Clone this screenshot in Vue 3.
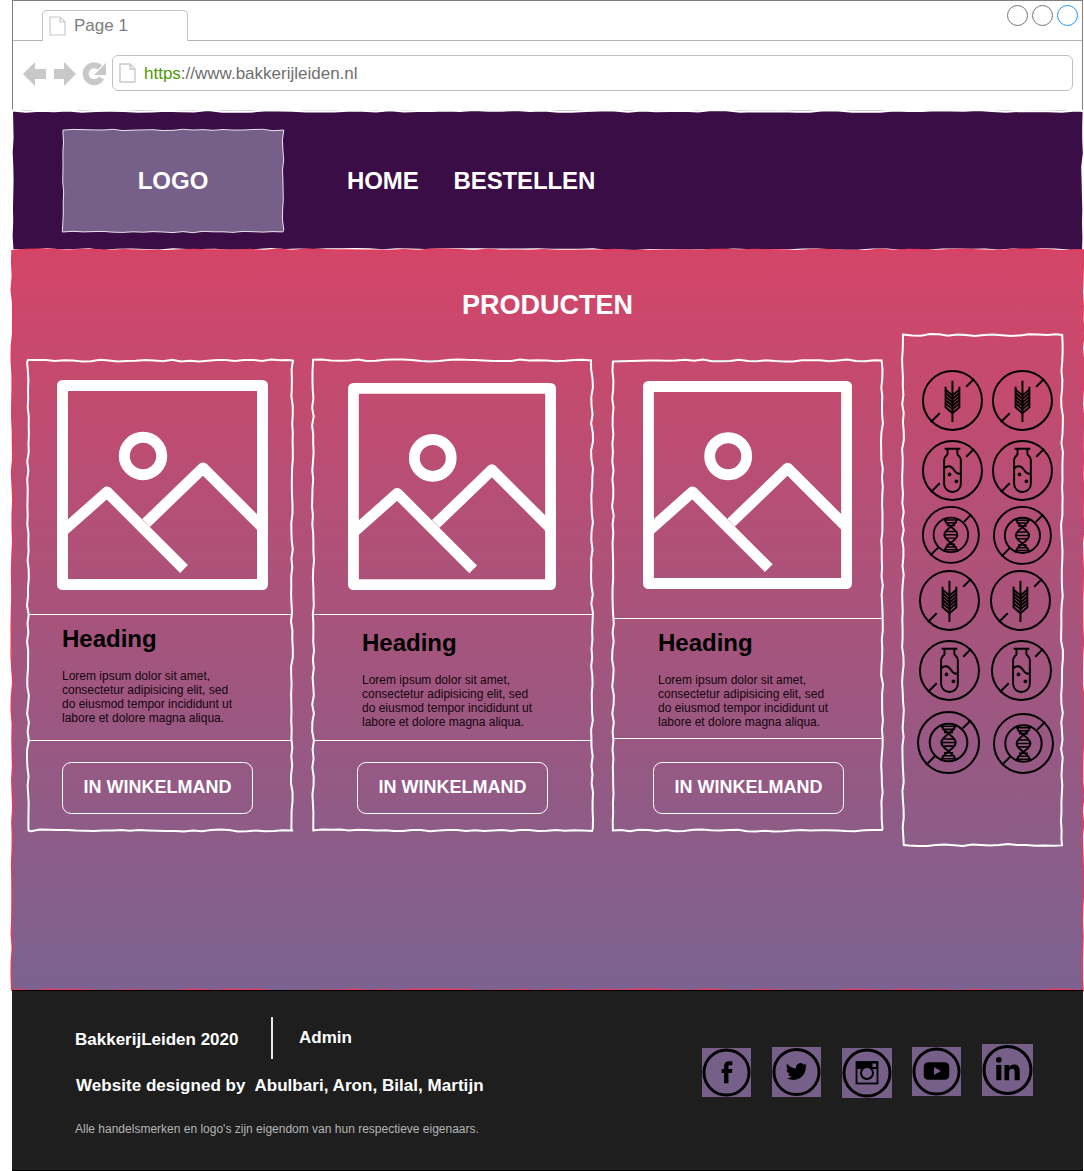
<script setup>
// hand-drawn looking rectangle outline, same seed gives same line
function wobble(w, h, seed, amp = 1, step = 9) {
  let s = seed * 9301 + 49297
  const rnd = () => {
    s = (s * 9301 + 49297) % 233280
    return (s / 233280 - 0.5) * 2 * amp
  }
  const pts = []
  for (let x = 0; x < w; x += step) pts.push([x, rnd()])
  for (let y = 0; y < h; y += step) pts.push([w + rnd(), y])
  for (let x = w; x > 0; x -= step) pts.push([x, h + rnd()])
  for (let y = h; y > 0; y -= step) pts.push([rnd(), y])
  return 'M' + pts.map(p => p[0].toFixed(1) + ' ' + p[1].toFixed(1)).join('L') + 'Z'
}

const cards = [
  { id: 1, w: 265, h: 470 },
  { id: 2, w: 280, h: 470 },
  { id: 3, w: 270, h: 470 }
]

// r and cx are in page pixels, the circle in the viewBox has r=30
const colStart = [916, 986]
const icons = [
  { kind: 'wheat', r: 29.5, cx: 952 },
  { kind: 'wheat', r: 29.5, cx: 1022 },
  { kind: 'vial', r: 29.5, cx: 952 },
  { kind: 'vial', r: 29.5, cx: 1022 },
  { kind: 'dna', r: 28, cx: 951 },
  { kind: 'dna', r: 28.5, cx: 1022 },
  { kind: 'wheat', r: 29.5, cx: 949 },
  { kind: 'wheat', r: 29.5, cx: 1020 },
  { kind: 'vial', r: 29.5, cx: 949 },
  { kind: 'vial', r: 29.5, cx: 1021 },
  { kind: 'dna', r: 30.5, cx: 949 },
  { kind: 'dna', r: 29.5, cx: 1023 }
].map((ic, i) => {
  const size = (ic.r * 64) / 30
  return { ...ic, size, ml: ic.cx - size / 2 - colStart[i % 2] }
})

const socials = [
  { name: 'facebook', w: 49, h: 49, mt: 4 },
  { name: 'twitter', w: 49, h: 50, mt: 3 },
  { name: 'instagram', w: 50, h: 50, mt: 4 },
  { name: 'youtube', w: 49, h: 49, mt: 3 },
  { name: 'linkedin', w: 51, h: 52, mt: 0 }
]
</script>

<template>
  <div class="page">
    <div class="chrome">
      <div class="tabbar">
        <div class="tab">
          <svg class="doc" width="17" height="20" viewBox="0 0 17 20">
            <path d="M1 1h10l5 5v13H1z M11 1v5h5" fill="#fff" stroke="#c9c9c9" stroke-width="1.2" />
          </svg>
          <span>Page 1</span>
        </div>
        <div class="winbtns">
          <i></i><i></i><i class="blue"></i>
        </div>
      </div>
      <div class="addr-row">
        <svg class="navicons" width="84" height="26" viewBox="0 0 84 26" fill="#c8c8c8">
          <path d="M0 14 12 2V9H23V19H12V26z" />
          <path d="M53 14 41 2V9H31V19H41V26z" />
          <path d="M78.500 18A8.500 8.500 0 1 1 77 7.500" fill="none" stroke="#c8c8c8" stroke-width="6" />
          <path d="M83 3V15H71z" />
        </svg>
        <div class="addr">
          <svg width="17" height="20" viewBox="0 0 17 20">
            <path d="M1 1h10l5 5v13H1z M11 1v5h5" fill="#fff" stroke="#c9c9c9" stroke-width="1.4" />
          </svg>
          <span class="url"><span class="https">https</span>://www.bakkerijleiden.nl</span>
        </div>
      </div>
    </div>

    <header class="header">
      <svg class="sketch"><path :d="wobble(1071, 139, 3, 0.9, 14)" fill="none" stroke="#fff" stroke-width="2" /></svg>
      <div class="logo">
        <svg class="sketch"><path :d="wobble(220, 102, 7, 0.8, 10)" fill="none" stroke="#e8e2ee" stroke-width="1" /></svg>
        LOGO
      </div>
      <nav class="nav">
        <a>HOME</a>
        <a>BESTELLEN</a>
      </nav>
    </header>

    <main class="main">
      <svg class="sketch"><path :d="wobble(1071, 740, 11, 0.9, 14)" fill="none" stroke="#e63a5c" stroke-width="1.5" /></svg>
      <h1 class="title">PRODUCTEN</h1>
      <div class="row">
        <div v-for="c in cards" :key="c.id" class="card" :class="'card-' + c.id">
          <svg class="sketch"><path :d="wobble(c.w - 1, c.h, c.id + 20)" transform="translate(1 0.500)" fill="none" stroke="#fff" stroke-width="2" /></svg>
          <div class="card-img">
            <svg class="placeholder" viewBox="0 0 211 211" fill="none" stroke="#fff" stroke-width="11" stroke-linejoin="round">
              <rect x="5.500" y="5.500" width="200" height="199" />
              <circle cx="86" cy="76" r="18.700" />
              <path d="M6 151 50 112 127 189" />
              <path d="M89 143 146 88 205 147" />
            </svg>
          </div>
          <div class="card-text">
            <h2>Heading</h2>
            <p>Lorem ipsum dolor sit amet,<br>consectetur adipisicing elit, sed<br>do eiusmod tempor incididunt ut<br>labore et dolore magna aliqua.</p>
          </div>
          <div class="card-btn">
            <button>IN WINKELMAND</button>
          </div>
        </div>

        <aside class="side">
          <svg class="sketch"><path :d="wobble(159, 510, 33)" transform="translate(1 1)" fill="none" stroke="#fff" stroke-width="2" /></svg>
          <div class="side-grid">
            <svg
              v-for="(ic, i) in icons"
              :key="i"
              class="allergen"
              :style="{ width: ic.size + 'px', height: ic.size + 'px', marginLeft: ic.ml + 'px' }"
              viewBox="-32 -32 64 64"
              fill="none"
              stroke="#000"
              stroke-width="2"
            >
              <circle r="30" />
              <path d="M22-22 14-14M-13 13-22 22" />
              <g v-if="ic.kind === 'wheat'">
                <path d="M0-20V22M-7-14V7L0 13 7 7V-14" />
                <path d="M-7-11 0-5 7-11M-7-7.500 0-1.500 7-7.500M-7-4 0 2 7-4M-7-.5 0 5.500 7-.5M-7 3 0 9 7 3" />
              </g>
              <g v-else-if="ic.kind === 'vial'">
                <path d="M-8-22H8M-5-21V-17C-5-15-8.500-14-8.500-11V13.500A8.500 8.500 0 0 0 8.500 13.500V-11C8.500-14 5-15 5-17V-21" />
                <path d="M-8.500-2C-4-7 0-3 2 0 4 3 6 4 8.500 3" />
                <circle cx="-3" cy="4" r="1.900" fill="#000" stroke="none" />
                <circle cx="4" cy="11" r="1.900" fill="#000" stroke="none" />
              </g>
              <g v-else>
                <circle r="18.500" />
                <path d="M-7-18C-7-10 7-7 7 0S-7 10-7 18M7-18C7-10-7-7-7 0S7 10 7 18" />
                <path d="M-7-16H7M-6-13H6M-4.500-10H4.500M-5-3.500H5M-7 0H7M-5 3.500H5M-4.500 10H4.500M-6 13H6M-7 16H7" stroke-width="1.600" />
              </g>
            </svg>
          </div>
        </aside>
      </div>
    </main>

    <footer class="footer">
      <div class="foot-left">
        <div class="foot-top">
          <span class="brand">BakkerijLeiden 2020</span>
          <span class="divider"></span>
          <span class="admin">Admin</span>
        </div>
        <div class="credits">Website designed by&nbsp; Abulbari, Aron, Bilal, Martijn</div>
        <div class="legal">Alle handelsmerken en logo's zijn eigendom van hun respectieve eigenaars.</div>
      </div>
      <div class="socials">
        <svg
          v-for="s in socials"
          :key="s.name"
          class="social"
          :style="{ width: s.w + 'px', height: s.h + 'px', marginTop: s.mt + 'px' }"
          viewBox="0 0 50 50"
        >
          <circle cx="25" cy="25" r="23" fill="none" stroke="#000" stroke-width="3" />
          <path v-if="s.name === 'facebook'" d="M31 13.500h-3.500c-3 0-5 2-5 5v3H20v4h2.500V36H27V25.500h3.500l.5-4h-4V19c0-1 .5-1.500 1.500-1.500H31z" />
          <path v-else-if="s.name === 'twitter'" transform="translate(14 14) scale(.9)" d="M23.953 4.570a10 10 0 0 1-2.825.775 4.958 4.958 0 0 0 2.163-2.723c-.951.555-2.005.959-3.127 1.184a4.920 4.920 0 0 0-8.384 4.482C7.690 8.095 4.067 6.130 1.640 3.162a4.822 4.822 0 0 0-.666 2.475c0 1.710.870 3.213 2.188 4.096a4.904 4.904 0 0 1-2.228-.616v.060a4.923 4.923 0 0 0 3.946 4.827 4.996 4.996 0 0 1-2.212.085 4.936 4.936 0 0 0 4.604 3.417 9.867 9.867 0 0 1-6.102 1.510 13.995 13.995 0 0 0 7.557 2.209c9.053 0 13.998-7.496 13.998-13.985 0-.210 0-.420-.015-.630A9.935 9.935 0 0 0 24 4.590z" />
          <g v-else-if="s.name === 'instagram'">
            <rect x="14.500" y="14" width="21" height="21.500" fill="none" stroke="#000" stroke-width="1.800" />
            <rect x="14.500" y="14" width="21" height="7" />
            <rect x="30.500" y="15.500" width="3.500" height="3.500" fill="#76608a" />
            <circle cx="25" cy="25" r="6" fill="#76608a" stroke="#000" stroke-width="2" />
          </g>
          <g v-else-if="s.name === 'youtube'">
            <rect x="12" y="15.500" width="26" height="18" rx="4.500" />
            <path d="M22.500 20.500v8l7-4z" fill="#76608a" />
          </g>
          <g v-else>
            <circle cx="16.500" cy="15" r="2.800" />
            <rect x="14" y="20" width="5" height="15" />
            <path d="M22 20h4.600v2.200c1-1.700 2.800-2.600 4.900-2.600 4 0 5.500 2.600 5.500 6.500V35h-5v-8c0-2-.6-3.300-2.400-3.300-2 0-3 1.300-3 3.500V35H22z" />
          </g>
        </svg>
      </div>
    </footer>
  </div>
</template>

<style>
body { background: #fff; }
</style>

<style scoped>
.page { width: 1071px; margin-left: 12px; font-family: "Liberation Sans", Arial, sans-serif; }

.chrome { height: 111px; box-sizing: border-box; border: 1px solid #808080; border-bottom-color: #bdbdbd; background: #fff; }
.tabbar { height: 40px; border-bottom: 1px solid #b5b5b5; display: flex; justify-content: space-between; padding: 9px 4px 0 29px; box-sizing: border-box; }
.tab { width: 146px; height: 31px; box-sizing: border-box; border: 1px solid #c4c4c4; border-bottom: 0; border-radius: 5px 5px 0 0; background: #fff; display: flex; align-items: center; gap: 8px; padding-left: 6px; color: #7d7d7d; font-size: 17px; margin-bottom: -1px; }
.winbtns { display: flex; gap: 4px; margin-top: -5px; }
.winbtns i { display: block; width: 21px; height: 21px; box-sizing: border-box; border: 1px solid #757575; border-radius: 50%; }
.winbtns i.blue { border-color: #2196f3; }
.addr-row { display: flex; align-items: center; padding: 14px 9px 0 10px; }
.navicons { flex: none; margin-right: 5px; }
.addr { flex: 1; height: 36px; box-sizing: border-box; border: 1px solid #c0c0c0; border-radius: 6px; display: flex; align-items: center; gap: 8px; padding-left: 6px; }
.url { color: #6f6f6f; font-size: 17px; padding-top: 2px; }
.https { color: #4e9a06; }

.header { position: relative; height: 139px; background: #3a0d47; display: flex; align-items: center; padding-left: 50px; box-sizing: border-box; }
.logo { position: relative; width: 220px; height: 102px; margin-left: 1px; background: #76608a; color: #fff; font-size: 24px; font-weight: bold; display: flex; align-items: center; justify-content: center; }
.nav { display: flex; gap: 35px; margin-left: 64px; color: #fff; font-size: 24px; font-weight: bold; letter-spacing: -0.12px; }

.main { position: relative; height: 740px; box-sizing: border-box; padding: 39px 0 0 15px; background: linear-gradient(180deg, #d44568 0%, #7b6290 100%); }
.title { margin: 0 0 13px -15px; text-align: center; color: #fff; font-size: 27px; line-height: 32px; font-weight: bold; }
.row { display: grid; grid-template-columns: 265px 280px 270px 160px; gap: 20px; align-items: start; }

.sketch { position: absolute; inset: 0; width: 100%; height: 100%; overflow: visible; pointer-events: none; }

.card { position: relative; margin-top: 26px; height: 470px; display: flex; flex-direction: column; }
.card-1 { --img-x: 30px; --img-y: 20px; --img-s: 211px; --img-h: 255px; --text-h: 126px; --text-x: 35px; --text-y: 10px; --btn-x: 35px; --btn-y: 21px; }
.card-2 { --img-x: 36px; --img-y: 23px; --img-s: 208px; --img-h: 255px; --text-h: 126px; --text-x: 50px; --text-y: 14px; --btn-x: 45px; --btn-y: 21px; }
.card-3 { --img-x: 31px; --img-y: 21px; --img-s: 209px; --img-h: 259px; --text-h: 120px; --text-x: 46px; --text-y: 10px; --btn-x: 41px; --btn-y: 23px; }
.card-img { height: var(--img-h); flex: none; box-sizing: border-box; padding: var(--img-y) 0 0 calc(var(--img-x) - 2px); border-bottom: 1px solid #fff; margin-left: 2px; }
.placeholder { display: block; width: var(--img-s); height: var(--img-s); }
.card-text { height: var(--text-h); flex: none; box-sizing: border-box; padding: var(--text-y) 0 0 calc(var(--text-x) - 2px); border-bottom: 1px solid #fff; margin-left: 2px; }
.card-text h2 { margin: 0 0 16px; font-size: 24px; line-height: 28px; font-weight: bold; color: #000; }
.card-text p { margin: 0; font-size: 12px; line-height: 14px; color: #14060f; }
.card-btn { padding: var(--btn-y) 0 0 var(--btn-x); }
.card-btn button { display: block; width: 191px; height: 52px; box-sizing: border-box; background: transparent; border: 1px solid #fff; border-radius: 9px; color: #fff; font-family: inherit; font-size: 18px; font-weight: bold; padding: 0 0 2px; }

.side { position: relative; height: 511px; box-sizing: border-box; padding: 31px 0 0 14px; }
.side-grid { display: grid; grid-template-columns: 70px 70px; grid-template-rows: 70px 70px 60px 70px 70px 76px; align-items: center; }
.allergen { display: block; }

.footer { position: relative; height: 181px; box-sizing: border-box; background: #1e1e1e; border: 1px solid #000; border-width: 1px 0; display: flex; justify-content: space-between; padding: 26px 50px 0 63px; color: #fff; }
.foot-top { display: flex; align-items: center; height: 42px; }
.brand { font-size: 17px; font-weight: bold; width: 196px; margin-top: 4px; }
.divider { width: 2px; height: 42px; background: #e6e6e6; }
.admin { font-size: 17px; font-weight: bold; margin-left: 26px; }
.credits { margin: 17px 0 0 1px; font-size: 17px; line-height: 20px; font-weight: bold; letter-spacing: 0.04px; }
.legal { margin-top: 26px; font-size: 12px; line-height: 14px; color: #b4b4b4; }
.socials { display: flex; align-items: flex-start; gap: 20.75px; padding-top: 27px; }
.social { display: block; background: #76608a; flex: none; }
</style>
